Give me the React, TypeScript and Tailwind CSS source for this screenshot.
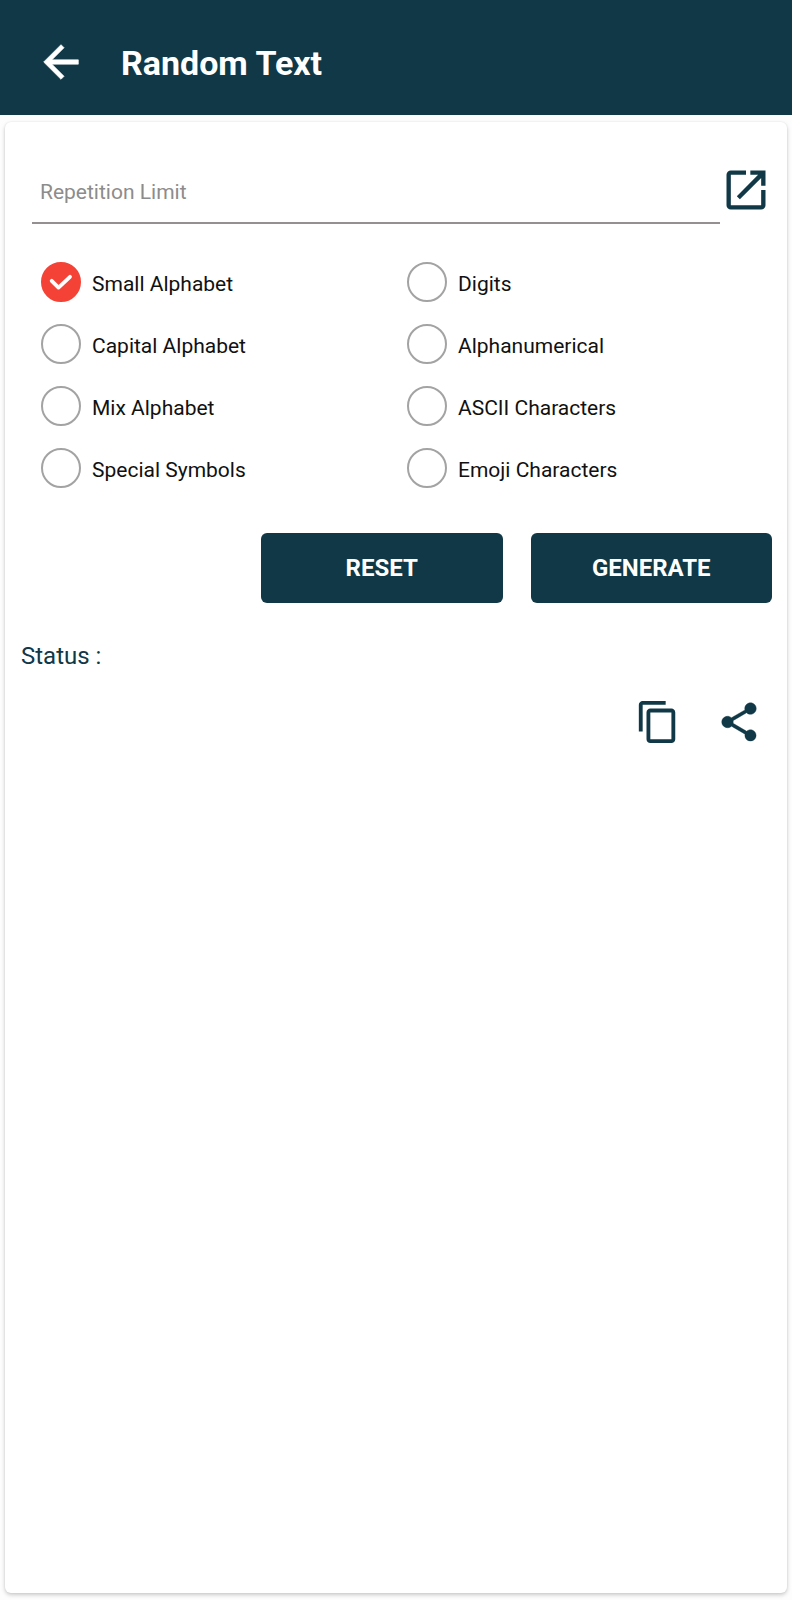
import { useState } from "react";

const leftOptions = ["Small Alphabet", "Capital Alphabet", "Mix Alphabet", "Special Symbols"];
const rightOptions = ["Digits", "Alphanumerical", "ASCII Characters", "Emoji Characters"];

type IconProps = { d: string; className: string; weight?: number };

function Icon({ d, className, weight = 0 }: IconProps) {
  return (
    <svg
      viewBox="0 0 24 24"
      fill="currentColor"
      stroke={weight ? "currentColor" : "none"}
      strokeWidth={weight}
      aria-hidden="true"
      className={className}
    >
      <path d={d} />
    </svg>
  );
}

const icons = {
  back: "M20 11H7.83l5.59-5.59L12 4l-8 8 8 8 1.41-1.41L7.83 13H20v-2z",
  open: "M19 19H5V5h7V3H5c-1.11 0-2 .9-2 2v14c0 1.1.89 2 2 2h14c1.1 0 2-.9 2-2v-7h-2v7zM14 3v2h3.59l-9.83 9.83 1.41 1.41L19 6.41V10h2V3h-7z",
  copy: "M16 1H4c-1.1 0-2 .9-2 2v14h2V3h12V1zm3 4H8c-1.1 0-2 .9-2 2v14c0 1.1.9 2 2 2h11c1.1 0 2-.9 2-2V7c0-1.1-.9-2-2-2zm0 16H8V7h11v14z",
  share:
    "M18 16.08c-.76 0-1.44.3-1.96.77L8.91 12.7c.05-.23.09-.46.09-.7s-.04-.47-.09-.7l7.05-4.11c.54.5 1.25.81 2.04.81 1.66 0 3-1.34 3-3s-1.34-3-3-3-3 1.34-3 3c0 .24.04.47.09.7L8.04 9.81C7.5 9.31 6.79 9 6 9c-1.66 0-3 1.34-3 3s1.34 3 3 3c.79 0 1.5-.31 2.04-.81l7.12 4.16c-.05.21-.08.43-.08.65 0 1.61 1.31 2.92 2.92 2.92 1.61 0 2.92-1.31 2.92-2.92s-1.31-2.92-2.92-2.92z",
};

type OptionProps = { label: string; selected: boolean; onSelect: () => void };

function Option({ label, selected, onSelect }: OptionProps) {
  return (
    <label className="flex h-10 cursor-pointer items-center gap-[11px] text-[21px] text-[#111111]">
      <span className="grid size-10 shrink-0 place-items-center">
        <input
          type="radio"
          name="charset"
          checked={selected}
          onChange={onSelect}
          className="col-start-1 row-start-1 size-10 appearance-none rounded-full border-2 border-[#a3a3a3] checked:border-[#f44336] checked:bg-[#f44336]"
        />
        {selected && (
          <svg
            viewBox="0 0 40 40"
            fill="none"
            stroke="#ffffff"
            strokeWidth="3.8"
            strokeLinecap="round"
            strokeLinejoin="round"
            aria-hidden="true"
            className="pointer-events-none col-start-1 row-start-1 size-10"
          >
            <path d="M10.7 18.8L17.5 25.6L29 14.8" />
          </svg>
        )}
      </span>
      <span className="pt-1 leading-6">{label}</span>
    </label>
  );
}

export default function App() {
  const [selected, setSelected] = useState("Small Alphabet");
  const [limit, setLimit] = useState("");

  const reset = () => {
    setSelected("Small Alphabet");
    setLimit("");
  };

  return (
    <div className="flex min-h-screen flex-col bg-[#fdfdfd] font-['Roboto',sans-serif]">
      <header className="flex h-[115px] items-center gap-[34px] bg-[#103846] pt-2 pl-[35px] text-white">
        <button type="button" aria-label="Back" className="size-[52px]">
          <Icon d={icons.back} weight={0.3} className="size-full" />
        </button>
        <h1 className="pt-0.5 text-[34px] leading-10 font-bold">Random Text</h1>
      </header>

      <main className="mx-[5px] mt-[7px] mb-[7px] flex flex-1 flex-col rounded-md bg-white shadow-[0_2px_4px_rgba(0,0,0,0.2),0_0_2px_rgba(0,0,0,0.08)]">
        <div className="mt-[38px] flex items-start pr-[15px] pl-[27px]">
          <input
            type="text"
            inputMode="numeric"
            aria-label="Repetition Limit"
            placeholder="Repetition Limit"
            value={limit}
            onChange={(e) => setLimit(e.target.value)}
            className="h-16 min-w-0 flex-1 border-b-2 border-[#949091] px-2 pt-0.5 text-[21px] text-[#111111] outline-none placeholder:text-[#8c8c8c]"
          />
          <button type="button" aria-label="Open" className="mt-1 size-[52px] shrink-0 text-[#103846]">
            <Icon d={icons.open} className="size-full" />
          </button>
        </div>

        <div
          role="radiogroup"
          aria-label="Character set"
          className="mt-[38px] grid grid-cols-2 pr-[14px] pl-9"
        >
          {[leftOptions, rightOptions].map((column) => (
            <div key={column[0]} className="flex flex-col gap-[22px]">
              {column.map((label) => (
                <Option
                  key={label}
                  label={label}
                  selected={selected === label}
                  onSelect={() => setSelected(label)}
                />
              ))}
            </div>
          ))}
        </div>

        <div className="mt-[45px] grid grid-cols-2 gap-7 pr-[15px] pl-64 text-2xl font-bold text-white">
          <button type="button" onClick={reset} className="h-[70px] rounded-md bg-[#103846]">
            RESET
          </button>
          <button type="button" className="h-[70px] rounded-md bg-[#103846]">
            GENERATE
          </button>
        </div>

        <p className="mt-[37px] px-4 text-2xl leading-8 text-[#103846]">Status :</p>

        <div className="mt-[27px] flex justify-end gap-[35px] pr-[25px] text-[#103846]">
          <button type="button" aria-label="Copy" className="size-[46px]">
            <Icon d={icons.copy} className="size-full" />
          </button>
          <button type="button" aria-label="Share" className="size-[46px]">
            <Icon d={icons.share} weight={0.2} className="size-full" />
          </button>
        </div>
      </main>
    </div>
  );
}
